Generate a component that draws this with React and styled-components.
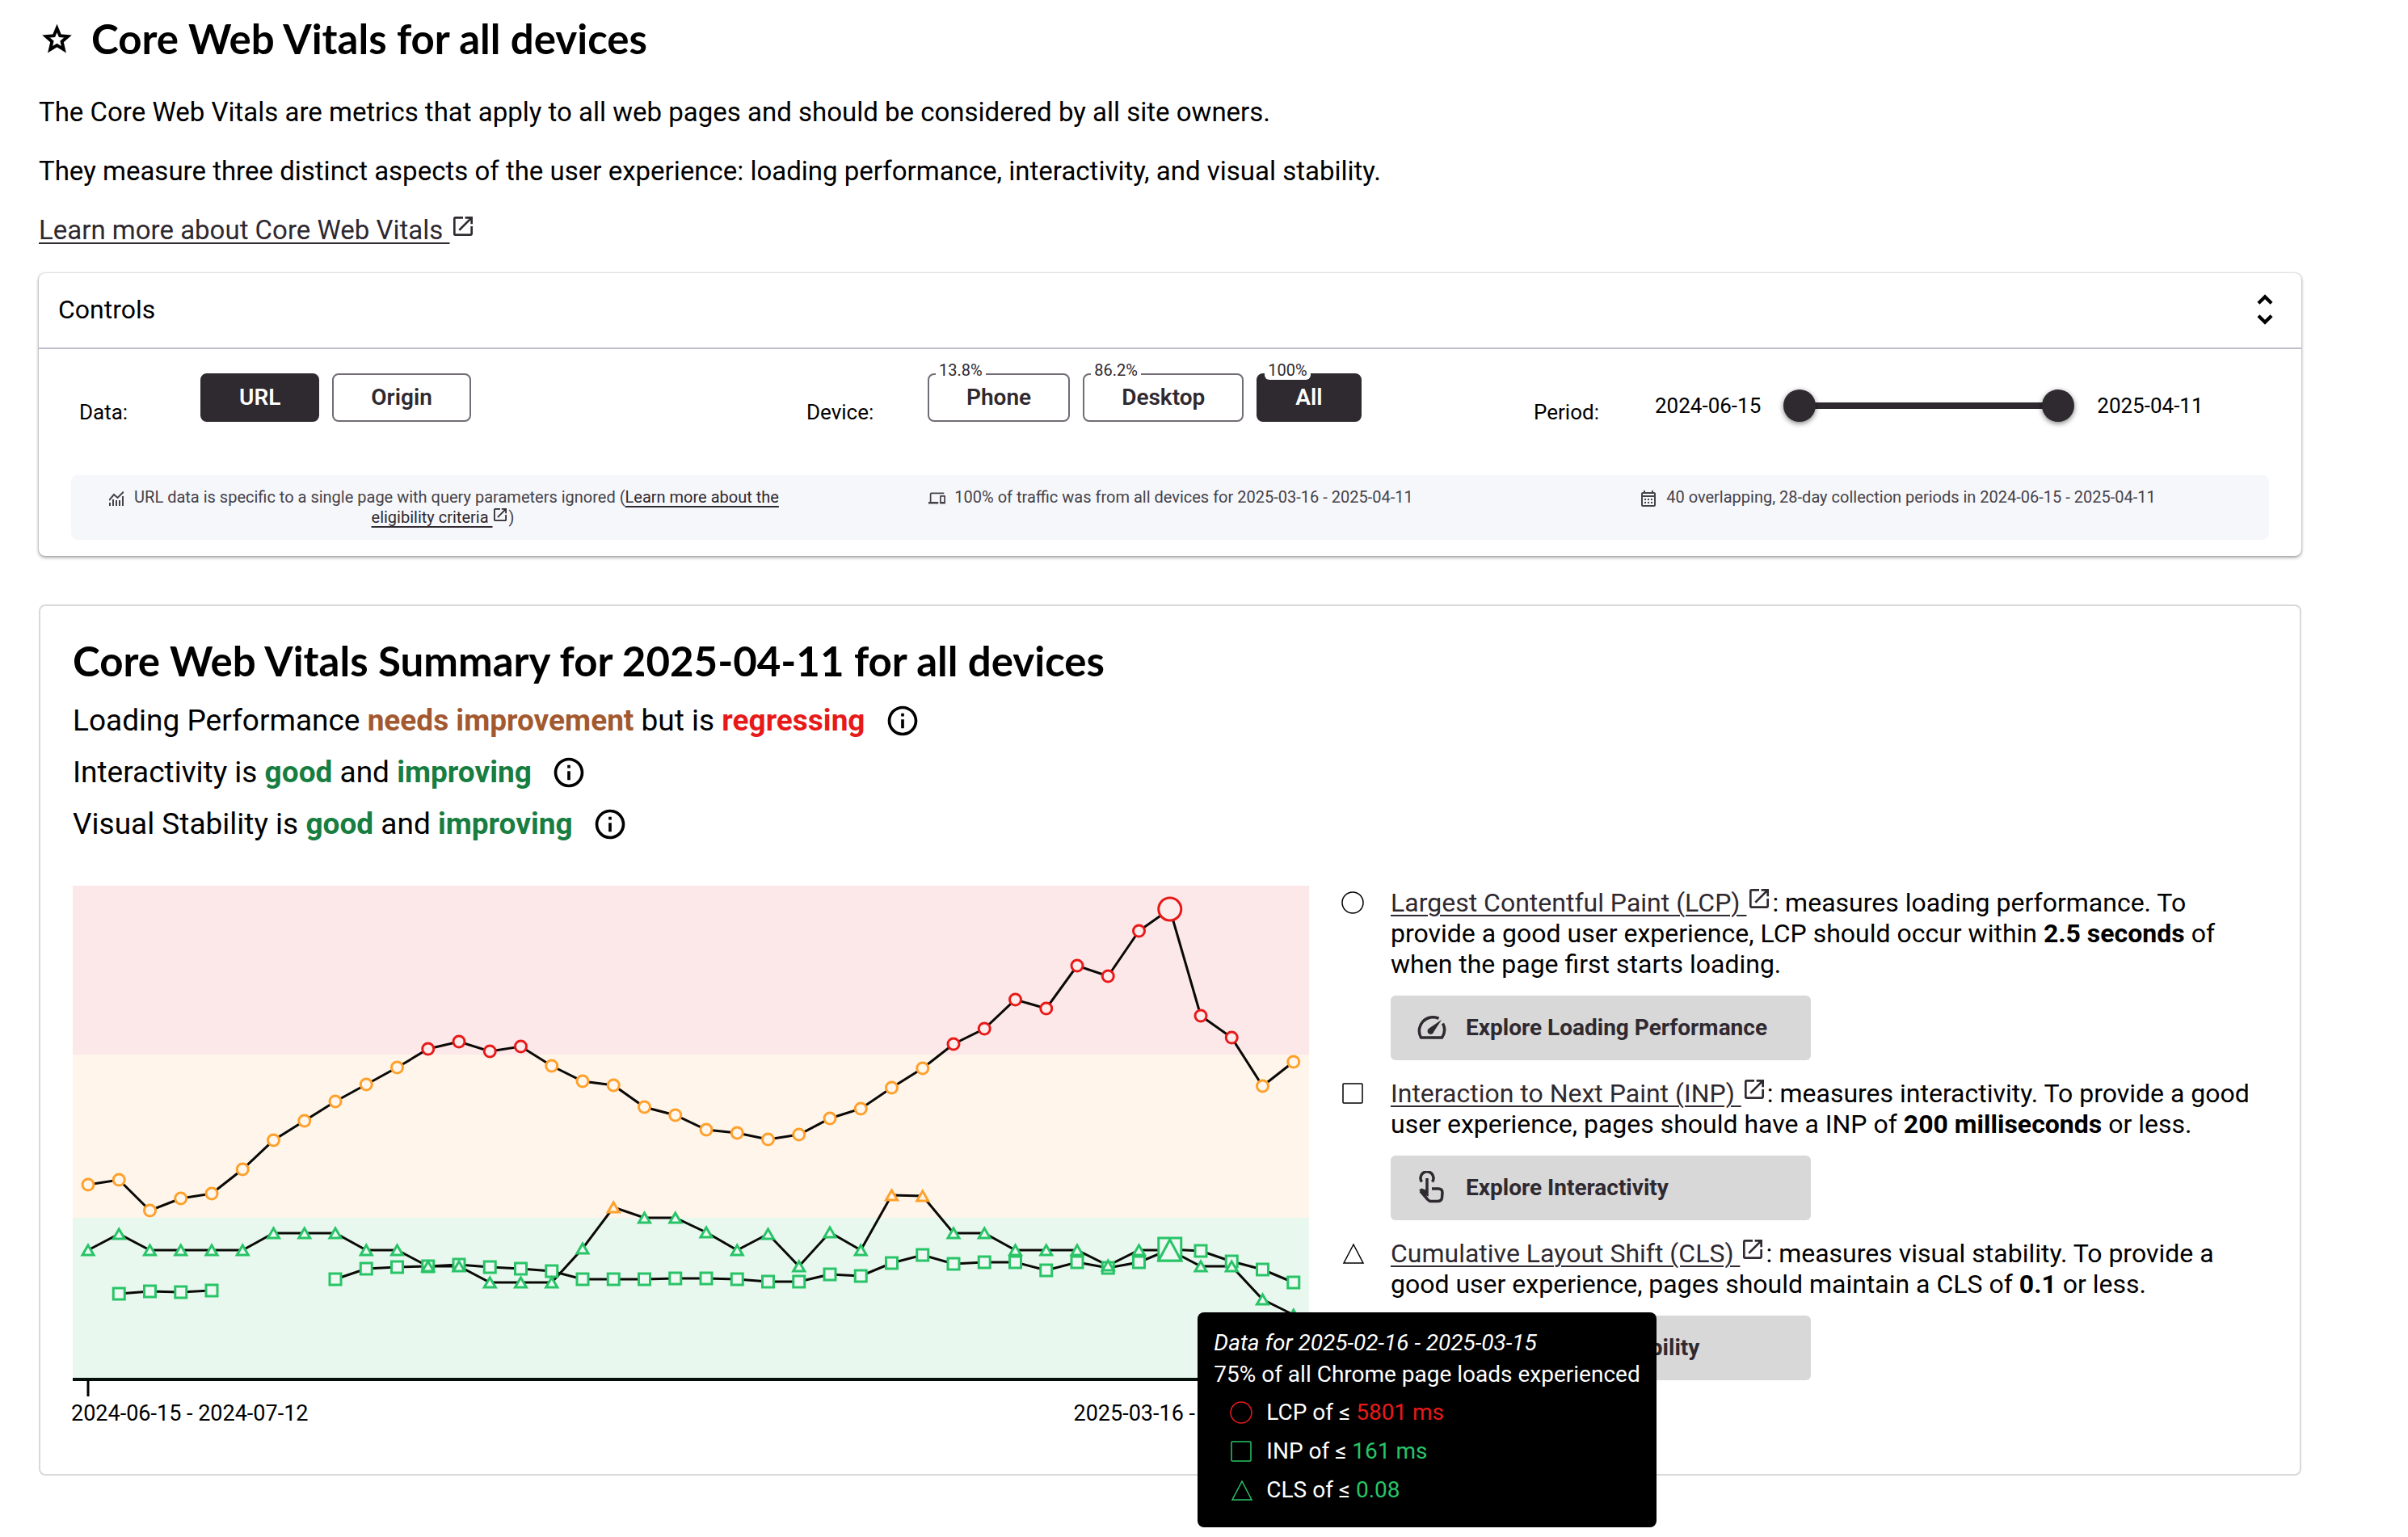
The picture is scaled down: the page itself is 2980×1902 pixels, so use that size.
import React, { useState } from 'react';
import styled, { createGlobalStyle } from 'styled-components';
import {
  MdInfoOutline,
  MdOutlineCalendarMonth,
  MdOutlineDevices,
  MdUnfoldMore,
} from 'react-icons/md';

const ink = '#2f2930';
const statusColor = { good: '#28c467', ni: '#ffa02b', poor: '#e81a19' };
const statusFill = { good: '#edf9f2', ni: '#fff7ee', poor: '#fdecec' };

const GlobalStyle = createGlobalStyle`
  * { box-sizing: border-box; }
  body {
    margin: 0;
    background: #fff;
    color: #000;
    font-family: Roboto, "Liberation Sans", sans-serif;
    font-size: 32px;
    line-height: 38px;
  }
  h1, h2, p, ul { margin: 0; padding: 0; }
  button { font-family: inherit; cursor: pointer; }
`;

const Page = styled.main`
  min-height: 100vh;
  padding: 18px 132px 76px 48px;
`;

const Title = styled.h1`
  display: flex;
  align-items: center;
  gap: 22px;
  padding-left: 2px;
  font-family: Lato, "Open Sans", sans-serif;
  font-size: 51px;
  font-weight: 700;
  line-height: 60px;
  margin-bottom: 41px;
`;

const Intro = styled.p`
  font-size: 33px;
  line-height: 40px;
  margin-bottom: 33px;
`;

const Link = styled.a`
  color: ${ink};
  text-decoration: underline;
  text-decoration-thickness: 2px;
  text-underline-offset: 4px;
`;

const LinkGlyph = styled.svg`
  width: ${(p) => p.$size}px;
  height: ${(p) => p.$size}px;
  margin: 0 ${(p) => (p.$size > 20 ? 4 : 2)}px;
  vertical-align: ${(p) => (p.$size > 20 ? 4 : 2)}px;
`;

const Panel = styled.section`
  border-radius: 8px;
  background: #fff;
  box-shadow: 0 0 2px rgba(0, 0, 0, 0.3), 0 2px 4px rgba(0, 0, 0, 0.35);
  padding-bottom: 20px;
`;

const PanelHeader = styled.button`
  display: flex;
  align-items: center;
  justify-content: space-between;
  width: 100%;
  height: 94px;
  padding: 0 20px 2px 24px;
  border: 0;
  border-bottom: 2px solid #c2bfcc;
  background: none;
  color: #000;
  font-size: 32px;
`;

const ControlRow = styled.div`
  display: grid;
  grid-template-columns: repeat(3, 1fr);
  padding: 30px 50px 0;
  height: 156px;
`;

const Control = styled.div`
  display: flex;
  align-items: flex-start;
`;

const ControlLabel = styled.span`
  flex: none;
  width: 150px;
  padding-top: 18px;
  font-size: 26px;
  line-height: 60px;
`;

const ButtonGroup = styled.div`
  display: flex;
  gap: 16px;
`;

const Toggle = styled.button`
  position: relative;
  height: 60px;
  padding: 0 46px;
  border: 2px solid ${(p) => (p.$on ? ink : '#726c76')};
  border-radius: 8px;
  background: ${(p) => (p.$on ? ink : '#fff')};
  color: ${(p) => (p.$on ? '#fff' : ink)};
  font-size: 28px;
  font-weight: 600;
  line-height: 34px;
`;

const Share = styled.span`
  position: absolute;
  top: -18px;
  left: 8px;
  padding: 0 4px;
  border-radius: 6px;
  background: #fff;
  color: ${ink};
  font-size: 20px;
  font-weight: 400;
  line-height: 24px;
`;

const RangeRow = styled.div`
  display: flex;
  align-items: center;
  gap: 28px;
  height: 80px;
  font-size: 26px;
`;

const RangeTrack = styled.div`
  display: grid;
  align-items: center;
  width: 360px;
  height: 40px;
  background: linear-gradient(${ink}, ${ink}) center / 320px 8px no-repeat;
`;

const Range = styled.input`
  grid-area: 1 / 1;
  appearance: none;
  width: 100%;
  height: 40px;
  margin: 0;
  background: none;
  pointer-events: none;
  &::-webkit-slider-thumb {
    appearance: none;
    width: 40px;
    height: 40px;
    border-radius: 50%;
    background: ${ink};
    box-shadow: 0 2px 6px rgba(0, 0, 0, 0.5);
    pointer-events: auto;
  }
`;

const Notes = styled.div`
  display: grid;
  grid-template-columns: repeat(3, 1fr);
  margin: 0 40px;
  padding: 15px 10px;
  border-radius: 8px;
  background: #f6f7fa;
  color: #454249;
  font-size: 20px;
  line-height: 25px;
  text-align: center;
`;

const NoteIcon = styled.span`
  display: inline-flex;
  align-items: center;
  justify-content: center;
  width: 24px;
  height: 20px;
  margin-right: 10px;
  vertical-align: middle;
  svg { flex: none; }
`;

const Card = styled.section`
  margin-top: 60px;
  padding: 38px 40px 44px;
  border: 2px solid #d9d9d9;
  border-radius: 8px;
`;

const CardTitle = styled.h2`
  font-family: Lato, "Open Sans", sans-serif;
  font-size: 51px;
  font-weight: 700;
  line-height: 60px;
  margin-bottom: 12px;
`;

const Finding = styled.p`
  display: flex;
  align-items: center;
  gap: 24px;
  font-size: 37px;
  line-height: 64px;
`;

const Verdict = styled.strong`
  color: ${(p) => p.$color};
`;

const InfoButton = styled.button`
  display: inline-flex;
  padding: 0;
  border: 0;
  background: none;
  color: #000;
`;

const Split = styled.div`
  display: grid;
  grid-template-columns: 1530fr 1146fr;
  gap: 40px;
  margin-top: 44px;
`;

const ChartBox = styled.div`
  position: relative;
`;

const ChartSvg = styled.svg`
  display: block;
  width: 100%;
  overflow: visible;
`;

const Tooltip = styled.div`
  position: absolute;
  top: 528px;
  left: 91%;
  z-index: 1;
  padding: 18px 20px 22px;
  border-radius: 8px;
  background: #000;
  color: #fff;
  font-size: 28px;
  line-height: 39px;
  white-space: nowrap;
`;

const TipLead = styled.div`
  margin-bottom: 4px;
`;

const TipRow = styled.div`
  display: flex;
  align-items: center;
  gap: 15px;
  padding-left: 20px;
  line-height: 48px;
`;

const TipValue = styled.span`
  color: ${(p) => p.$color};
`;

const MetricList = styled.ul`
  display: flex;
  flex-direction: column;
  gap: 22px;
  list-style: none;
  padding-top: 2px;
`;

const Metric = styled.li`
  display: grid;
  grid-template-columns: 61px 1fr;
`;

const MetricShape = styled.span`
  display: flex;
  align-items: center;
  height: 38px;
`;

const Explore = styled.button`
  display: flex;
  align-items: center;
  gap: 18px;
  width: 520px;
  height: 80px;
  margin-top: 20px;
  padding: 0 30px 2px;
  border: 0;
  border-radius: 6px;
  background: #d8d8d8;
  color: ${ink};
  font-size: 28px;
  font-weight: 700;
  svg { flex: none; }
`;

function OutIcon({ size = 24 }) {
  return (
    <LinkGlyph $size={size} viewBox="3 3 18 18" fill="currentColor" aria-hidden="true">
      <path d="M19 19H5V5h7V3H5a2 2 0 0 0-2 2v14a2 2 0 0 0 2 2h14c1.1 0 2-.9 2-2v-7h-2v7zM14 3v2h3.59l-9.83 9.83 1.41 1.41L19 6.41V10h2V3h-7z" />
    </LinkGlyph>
  );
}

function StarIcon() {
  return (
    <svg width="41" height="44" viewBox="0 0 41 44" fill="none" stroke="#000" strokeWidth="4" aria-hidden="true">
      <path d="M20.500 9 L24.300 18.200 L34 19 L26.600 25.500 L28.900 35.200 L20.500 30.100 L12.100 35.200 L14.400 25.500 L7 19 L16.700 18.200 Z" />
    </svg>
  );
}

function TrendIcon() {
  return (
    <svg width="18" height="18" viewBox="0 0 18 18" fill="none" stroke="currentColor" strokeWidth="2" aria-hidden="true">
      <path d="M0 11 L6 4 L10.500 8 L18 0.500" />
      <path d="M1 18 V14 M5 18 V10 M9 18 V11 M13 18 V11 M17 18 V6" />
    </svg>
  );
}

function SpeedIcon() {
  return (
    <svg width="45" height="40" viewBox="-2 -5 45 40" fill="none" stroke="currentColor" strokeWidth="3.5" aria-hidden="true">
      <path d="M27.500 4.300 A17 17 0 0 0 5.500 28 H31.500 A17 17 0 0 0 32.500 10.500" strokeLinejoin="round" />
      <path d="M31 6 L21.500 20.500 A4 4 0 1 1 15.500 16.500 Z" fill="currentColor" stroke="none" />
    </svg>
  );
}

function TouchIcon() {
  return (
    <svg width="45" height="40" viewBox="-4 0 45 40" fill="none" stroke="currentColor" strokeWidth="3.5" aria-hidden="true">
      <path d="M4.500 13.500 A8 8 0 1 1 17.500 13.500" />
      <path d="M11 9 V29 L3 25 L12 35.500 Q13.500 37.500 16 37.500 H24 Q29 37.500 29.500 33 L30 27 Q30 22 25 22 H17" />
      <path d="M1 24 L4 21.500 L11 24 V30 Z" fill="currentColor" stroke="none" />
    </svg>
  );
}

function LayoutIcon() {
  return (
    <svg width="45" height="40" viewBox="-4 0 45 40" fill="none" stroke="currentColor" strokeWidth="3.500" aria-hidden="true">
      <path d="M4 6 H33 V34 H4 Z M4 15 H33 M14 15 V34" />
    </svg>
  );
}

function Outline({ kind, color = '#000' }) {
  return (
    <svg width="30" height="30" viewBox="0 0 30 30" fill="none" stroke={color} strokeWidth="1.500" aria-hidden="true">
      {kind === 'circle' && <circle cx="14" cy="15" r="13" />}
      {kind === 'square' && <rect x="2" y="3" width="24" height="24" rx="1" />}
      {kind === 'triangle' && <path d="M15 4 L27 27 H3 Z" />}
    </svg>
  );
}

/* Chart geometry: 40 collection periods on equal bands */
const STEP = 38.25;
const xAt = (i) => 19 + STEP * i;

const LCP = [370, 364, 402, 387, 381, 351, 315, 291, 267, 246, 225, 202, 193, 205, 199, 223, 242, 247, 274, 284,
  302, 306, 314, 308, 288, 276, 250, 226, 196, 177, 141, 152, 99, 112, 56, 29, 161, 188, 248, 218];
const INP = [null, 505, 502, 503, 501, null, null, null, 487, 474, 472, 471, 469, 472, 474, 477, 487, 487, 487, 486,
  486, 487, 490, 490, 481, 483, 467, 457, 468, 466, 466, 476, 466, 473, 466, 450, 452, 465, 475, 491];
const CLS = [451, 431, 451, 451, 451, 451, 430, 430, 430, 451, 451, 471, 471, 491, 491, 491, 449, 398, 411, 411,
  429, 451, 431, 471, 429, 451, 383, 384, 430, 430, 451, 451, 451, 470, 451, 451, 471, 471, 512, 531];
const SELECTED = 35;

const statusAt = (y) => (y < 209 ? 'poor' : y < 409 ? 'ni' : 'good');

function linePath(values) {
  let pen = 'M';
  return values
    .map((y, i) => {
      if (y === null) {
        pen = 'M';
        return '';
      }
      const part = `${pen}${xAt(i)} ${y}`;
      pen = 'L';
      return part;
    })
    .join(' ');
}

function Marker({ kind, x, y, big }) {
  const s = statusAt(y);
  const r = big ? 14 : 7;
  const paint = { stroke: statusColor[s], fill: statusFill[s], strokeWidth: 3 };
  if (kind === 'circle') return <circle cx={x} cy={y} r={r} {...paint} />;
  if (kind === 'square') return <rect x={x - r} y={y - r} width={2 * r} height={2 * r} {...paint} />;
  return <path d={`M${x} ${y - r + 1} L${x + r} ${y + r - 1} H${x - r} Z`} {...paint} />;
}

function Series({ kind, values }) {
  return values.map((y, i) =>
    y === null ? null : <Marker key={i} kind={kind} x={xAt(i)} y={y} big={i === SELECTED} />
  );
}

function Chart() {
  return (
    <ChartSvg viewBox="0 0 1530 684" role="img" aria-label="Core Web Vitals over time">
      <rect width="1530" height="209" fill="#fce8e9" />
      <rect y="209" width="1530" height="202" fill="#fff5ea" />
      <rect y="411" width="1530" height="199" fill="#e8f8ef" />
      <path d="M0 611 H1530" stroke="#06100b" strokeWidth="4" />
      <path d={`M${xAt(0)} 612 V632 M${xAt(39)} 612 V632`} stroke="#000" strokeWidth="3" />
      <g fill="none" stroke="#0a0906" strokeWidth="3">
        <path d={linePath(LCP)} />
        <path d={linePath(INP)} />
        <path d={linePath(CLS)} />
      </g>
      <Series kind="circle" values={LCP} />
      <Series kind="square" values={INP} />
      <Series kind="triangle" values={CLS} />
      <g fontFamily="Roboto, sans-serif" fontSize="27" fill="#000">
        <text x="-2" y="662">2024-06-15 - 2024-07-12</text>
        <text x="1532" y="662" textAnchor="end">2025-03-16 - 2025-04-11</text>
      </g>
    </ChartSvg>
  );
}

function Toggles({ label, options, initial }) {
  const [value, setValue] = useState(initial);
  return (
    <Control role="group" aria-label={label}>
      <ControlLabel>{label}:</ControlLabel>
      <ButtonGroup>
        {options.map(([name, share]) => (
          <Toggle key={name} type="button" $on={value === name} aria-pressed={value === name} onClick={() => setValue(name)}>
            {share && <Share>{share}</Share>}
            {name}
          </Toggle>
        ))}
      </ButtonGroup>
    </Control>
  );
}

function Info({ topic }) {
  return (
    <InfoButton type="button" aria-label={`About ${topic}`}>
      <MdInfoOutline size={44} />
    </InfoButton>
  );
}

export default function App() {
  return (
    <Page>
      <GlobalStyle />
      <Title><StarIcon />Core Web Vitals for all devices</Title>
      <Intro>The Core Web Vitals are metrics that apply to all web pages and should be considered by all site owners.</Intro>
      <Intro>They measure three distinct aspects of the user experience: loading performance, interactivity, and visual stability.</Intro>
      <Intro><Link href="#vitals">Learn more about Core Web Vitals <OutIcon /></Link></Intro>

      <Panel>
        <PanelHeader type="button" aria-expanded="true">
          Controls
          <MdUnfoldMore size={50} aria-hidden="true" />
        </PanelHeader>
        <ControlRow>
          <Toggles label="Data" initial="URL" options={[['URL'], ['Origin']]} />
          <Toggles label="Device" initial="All" options={[['Phone', '13.8%'], ['Desktop', '86.2%'], ['All', '100%']]} />
          <Control role="group" aria-label="Period">
            <ControlLabel>Period:</ControlLabel>
            <RangeRow>
              <span>2024-06-15</span>
              <RangeTrack>
                <Range type="range" aria-label="Period start" min="0" max="39" defaultValue="0" />
                <Range type="range" aria-label="Period end" min="0" max="39" defaultValue="39" />
              </RangeTrack>
              <span>2025-04-11</span>
            </RangeRow>
          </Control>
        </ControlRow>
        <Notes>
          <p>
            <NoteIcon><TrendIcon /></NoteIcon>
            URL data is specific to a single page with query parameters ignored (
            <Link href="#eligibility">Learn more about the eligibility criteria <OutIcon size={16} /></Link>)
          </p>
          <p><NoteIcon><MdOutlineDevices size={21} /></NoteIcon>100% of traffic was from all devices for 2025-03-16 - 2025-04-11</p>
          <p><NoteIcon><MdOutlineCalendarMonth size={24} /></NoteIcon>40 overlapping, 28-day collection periods in 2024-06-15 - 2025-04-11</p>
        </Notes>
      </Panel>

      <Card>
        <CardTitle>Core Web Vitals Summary for 2025-04-11 for all devices</CardTitle>
        <Finding>
          <span>Loading Performance <Verdict $color="#a3592f">needs improvement</Verdict> but is <Verdict $color="#e81a19">regressing</Verdict></span>
          <Info topic="loading performance" />
        </Finding>
        <Finding>
          <span>Interactivity is <Verdict $color="#187d41">good</Verdict> and <Verdict $color="#187d41">improving</Verdict></span>
          <Info topic="interactivity" />
        </Finding>
        <Finding>
          <span>Visual Stability is <Verdict $color="#187d41">good</Verdict> and <Verdict $color="#187d41">improving</Verdict></span>
          <Info topic="visual stability" />
        </Finding>

        <Split>
          <ChartBox>
            <Chart />
            <Tooltip role="tooltip">
              <em>Data for 2025-02-16 - 2025-03-15</em>
              <TipLead>75% of all Chrome page loads experienced</TipLead>
              <TipRow><Outline kind="circle" color={statusColor.poor} /><span>LCP of ≤ <TipValue $color={statusColor.poor}>5801 ms</TipValue></span></TipRow>
              <TipRow><Outline kind="square" color={statusColor.good} /><span>INP of ≤ <TipValue $color={statusColor.good}>161 ms</TipValue></span></TipRow>
              <TipRow><Outline kind="triangle" color={statusColor.good} /><span>CLS of ≤ <TipValue $color={statusColor.good}>0.08</TipValue></span></TipRow>
            </Tooltip>
          </ChartBox>
          <MetricList>
            <Metric>
              <MetricShape><Outline kind="circle" /></MetricShape>
              <div>
                <p><Link href="#lcp">Largest Contentful Paint (LCP) <OutIcon /></Link>: measures loading performance. To provide a good user experience, LCP should occur within <b>2.5 seconds</b> of when the page first starts loading.</p>
                <Explore type="button"><SpeedIcon />Explore Loading Performance</Explore>
              </div>
            </Metric>
            <Metric>
              <MetricShape><Outline kind="square" /></MetricShape>
              <div>
                <p><Link href="#inp">Interaction to Next Paint (INP) <OutIcon /></Link>: measures interactivity. To provide a good user experience, pages should have a INP of <b>200 milliseconds</b> or less.</p>
                <Explore type="button"><TouchIcon />Explore Interactivity</Explore>
              </div>
            </Metric>
            <Metric>
              <MetricShape><Outline kind="triangle" /></MetricShape>
              <div>
                <p><Link href="#cls">Cumulative Layout Shift (CLS) <OutIcon /></Link>: measures visual stability. To provide a good user experience, pages should maintain a CLS of <b>0.1</b> or less.</p>
                <Explore type="button"><LayoutIcon />Explore Visual Stability</Explore>
              </div>
            </Metric>
          </MetricList>
        </Split>
      </Card>
    </Page>
  );
}
